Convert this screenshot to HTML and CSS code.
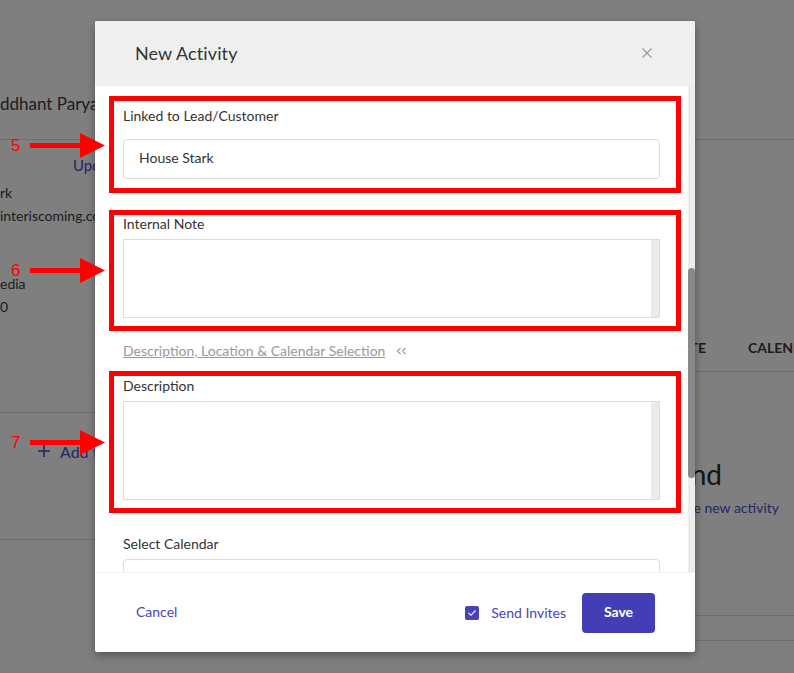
FILE: index.html
```html
<!DOCTYPE html>
<html>
<head>
<meta charset="utf-8">
<link rel="stylesheet" href="styles.css">
</head>
<body>
<div class="page">
  <aside class="side">
    <div class="name">ddhant Paryani</div>
    <div class="divider d1"></div>
    <div class="update">Update</div>
    <div class="info first">rk</div>
    <div class="info">interiscoming.com</div>
    <div class="info gap">edia</div>
    <div class="info">0</div>
    <div class="divider d2"></div>
    <div class="add">
      <svg class="plus" width="12" height="12" viewBox="0 0 12 12"><path d="M6 0V12M0 6H12" stroke="#4b4bd0" stroke-width="1.6"/></svg>
      <span>Add to list</span>
    </div>
    <div class="divider d3"></div>
  </aside>
  <main class="main">
    <div class="divider m1"></div>
    <div class="tabs">
      <span class="tab-left">ACTIVITY&nbsp;&nbsp;&nbsp;&nbsp;&nbsp;NOTE</span>
      <span>CALENDAR</span>
    </div>
    <div class="divider m2"></div>
    <div class="empty-title">No Activities Found</div>
    <div class="empty-link">Create new activity</div>
    <div class="divider m3"></div>
    <div class="divider m4"></div>
  </main>
</div>
<div class="overlay"></div>

<div class="modal">
  <div class="modal-head">
    <h2 class="modal-title">New Activity</h2>
    <svg class="close" width="10" height="10" viewBox="0 0 10 10"><path d="M0.5 0.5L9.5 9.5M9.5 0.5L0.5 9.5" stroke="#9a9a9a" stroke-width="1.2"/></svg>
  </div>
  <div class="modal-body">
    <div class="content">
      <div class="mark mark1">
        <div class="label">Linked to Lead/Customer</div>
        <div class="input">House Stark</div>
      </div>
      <div class="mark mark2">
        <div class="label">Internal Note</div>
        <div class="textarea short"><div class="ta-space"></div><div class="ta-track"></div></div>
      </div>
      <div class="toggle">
        <span class="toggle-link">Description, Location &amp; Calendar Selection</span>
        <svg width="11" height="8" viewBox="0 0 11 8"><path d="M4.5 1L1.5 4L4.5 7M9.5 1L6.5 4L9.5 7" fill="none" stroke="#9a9a9a" stroke-width="1.1"/></svg>
      </div>
      <div class="mark mark3">
        <div class="label">Description</div>
        <div class="textarea tall"><div class="ta-space"></div><div class="ta-track"></div></div>
      </div>
      <div class="label cal-label">Select Calendar</div>
      <div class="input cal-input"></div>
    </div>
    <div class="track"><div class="thumb"></div></div>
  </div>
  <div class="modal-foot">
    <span class="cancel">Cancel</span>
    <div class="foot-right">
      <label class="invites">
        <span class="check"><svg width="10" height="8" viewBox="0 0 10 8"><path d="M1.5 4L4 6.3L8.5 1.5" fill="none" stroke="#fff" stroke-width="1.1"/></svg></span>
        Send Invites
      </label>
      <button class="save">Save</button>
    </div>
  </div>
</div>

<div class="arrow arrow5"><span class="num">5</span><svg width="75" height="25" viewBox="0 0 75 25"><rect x="0" y="10" width="52" height="5" fill="#ff0000"/><path d="M50 0L75 12.5L50 25Z" fill="#ff0000"/></svg></div>
<div class="arrow arrow6"><span class="num">6</span><svg width="75" height="25" viewBox="0 0 75 25"><rect x="0" y="10" width="52" height="5" fill="#ff0000"/><path d="M50 0L75 12.5L50 25Z" fill="#ff0000"/></svg></div>
<div class="arrow arrow7"><span class="num">7</span><svg width="75" height="25" viewBox="0 0 75 25"><rect x="0" y="10" width="52" height="5" fill="#ff0000"/><path d="M50 0L75 12.5L50 25Z" fill="#ff0000"/></svg></div>
</body>
</html>
```

FILE: styles.css
```css
* { box-sizing: border-box; }
html, body { margin: 0; padding: 0; }
body {
  width: 794px;
  height: 673px;
  overflow: hidden;
  position: relative;
  background: #fff;
  font-family: "Lato", "Open Sans", sans-serif;
  color: #333;
}

/* background page */
.page { display: flex; width: 794px; height: 673px; }
.side { width: 400px; flex: none; }
.main { width: 394px; flex: none; }
.divider { height: 1px; background: #dcdcdc; }
.name { margin-top: 94px; font-size: 17px; line-height: 20px; color: #3a3a3a; white-space: nowrap; }
.d1 { margin-top: 25px; }
.update { margin-top: 15px; padding-left: 73px; font-size: 15px; line-height: 20px; color: #4b4bd4; }
.info { font-size: 14px; line-height: 23px; color: #3a3a3a; white-space: nowrap; }
.info.first { margin-top: 6px; }
.info.gap { margin-top: 45px; }
.d2 { margin-top: 94px; }
.add { margin-top: 28px; padding-left: 38px; display: flex; align-items: center; gap: 10px; height: 20px; font-size: 16px; color: #4b4bd0; }
.d3 { margin-top: 78px; }

.m1 { margin-top: 139px; }
.tabs { margin-top: 198px; display: grid; grid-template-columns: 306px 1fr; column-gap: 42px; font-size: 14px; font-weight: 700; line-height: 20px; color: #3a3a3a; white-space: nowrap; }
.tab-left { text-align: right; }
.m2 { margin-top: 13px; background: #d6d9ee; }
.empty-title { margin-top: 86px; text-align: right; padding-right: 72px; font-size: 28px; line-height: 32px; color: #2a2a2a; white-space: nowrap; }
.empty-link { margin-top: 8px; text-align: right; padding-right: 15px; font-size: 14px; line-height: 20px; color: #4b4bd0; white-space: nowrap; }
.m3 { margin-top: 97px; }
.m4 { margin-top: 24px; }

.overlay { position: absolute; inset: 0; background: rgba(0,0,0,0.5); }

/* modal */
.modal {
  position: absolute;
  left: 95px;
  top: 21px;
  width: 600px;
  height: 631px;
  background: #fff;
  display: flex;
  flex-direction: column;
  border-radius: 2px;
  box-shadow: 0 3px 10px rgba(0,0,0,0.35);
  overflow: hidden;
}
.modal-head {
  height: 65px;
  flex: none;
  background: #eef0ef;
  display: flex;
  align-items: center;
  justify-content: space-between;
  padding: 0 43px 2px 40px;
}
.modal-title { margin: 0; font-size: 18px; font-weight: 400; color: #333; letter-spacing: 0.1px; }
.close { margin-top: 0; }

.modal-body { height: 486px; flex: none; display: flex; overflow: hidden; }
.content { flex: 1; padding: 10px 28px 0 28px; overflow: hidden; }
.track { width: 7px; flex: none; background: #ececec; padding-top: 182px; }
.thumb { width: 7px; height: 210px; background: #888; border-radius: 4px; }

.mark { border: 5px solid #ff0000; margin: 0 -21px 0 -14px; padding: 0 16px 0 9px; }
.mark1 { padding-top: 5px; padding-bottom: 9px; }
.mark1 .label { line-height: 20px; }
.mark1 .input { margin-top: 13px; }
.mark2 { margin-top: 17px; padding-bottom: 8px; }
.mark3 { margin-top: 10px; padding-top: 1px; padding-bottom: 8px; }
.mark2 .label, .mark3 .label { line-height: 18px; }

.label { font-size: 14px; color: #333; line-height: 20px; }
.input {
  height: 40px;
  border: 1px solid #dcdde3;
  border-radius: 4px;
  padding: 0 15px;
  font-size: 14px;
  line-height: 36px;
  color: #333;
}
.textarea { margin-top: 6px; border: 1px solid #dcdde3; display: flex; }
.textarea.short { height: 79px; }
.textarea.tall { height: 99px; }
.ta-space { flex: 1; }
.ta-track { width: 8px; background: #ebebeb; }

.toggle { margin-top: 10px; height: 20px; display: flex; align-items: center; gap: 11px; }
.toggle-link { font-size: 14px; color: #999; text-decoration: underline; line-height: 20px; }
.cal-label { margin-top: 21px; }
.cal-input { margin-top: 5px; }

.modal-foot {
  height: 80px;
  flex: none;
  border-top: 1px solid #f0f0f0;
  display: flex;
  align-items: center;
  justify-content: space-between;
  padding: 0 40px 2px 41px;
}
.cancel { font-size: 14px; color: #4743c0; }
.foot-right { display: flex; align-items: center; margin-top: 2px; }
.invites { display: flex; align-items: center; gap: 12px; font-size: 14px; color: #4743c0; margin-right: 16px; }
.check { width: 14px; height: 14px; border-radius: 2px; background: #4742b8; display: flex; align-items: center; justify-content: center; }
.save {
  width: 73px;
  height: 40px;
  border: none;
  border-radius: 4px;
  background: #433db6;
  color: #fff;
  font-family: inherit;
  font-size: 14px;
  font-weight: 700;
  padding-bottom: 3px;
}

/* annotation arrows */
.arrow { position: absolute; left: 11px; display: flex; align-items: center; gap: 10px; }
.arrow .num { font-family: "Liberation Sans", sans-serif; font-size: 17px; color: #ff0000; width: 9px; line-height: 20px; }
.arrow5 { top: 133px; }
.arrow6 { top: 258px; }
.arrow7 { top: 430px; }
```
